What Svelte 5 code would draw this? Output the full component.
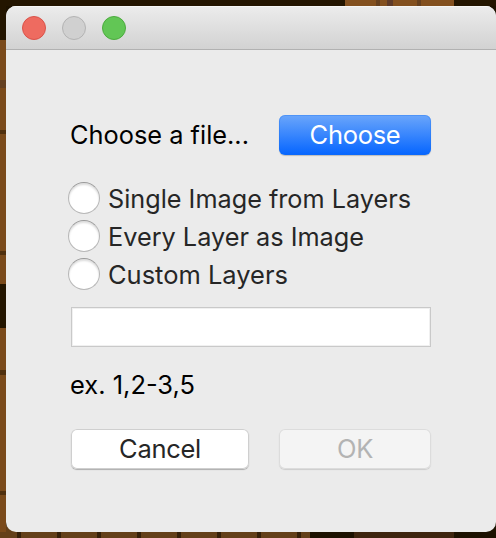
<script>
  const options = [
    { label: 'Single Image from Layers', width: 303 },
    { label: 'Every Layer as Image', width: 256 },
    { label: 'Custom Layers', width: 180 }
  ];
</script>

<main class="desktop">
  <section class="window">
    <header>
      <i class="light red"></i><i class="light gray"></i><i class="light green"></i>
    </header>
    <div class="body">
      <div class="row">
        <svg class="caption" width="200" height="40"><text x="-1" y="29" textLength="179" lengthAdjust="spacingAndGlyphs">Choose a file...</text></svg>
        <button class="primary"><span>Choose</span></button>
      </div>
      <div class="options">
        {#each options as option}
          <label><i class="radio"></i><svg width="320" height="38"><text x="0" y="29" textLength={option.width} lengthAdjust="spacingAndGlyphs">{option.label}</text></svg></label>
        {/each}
      </div>
      <input type="text" aria-label="Layers" />
      <svg class="caption example" width="200" height="40"><text x="-1" y="29" textLength="125" lengthAdjust="spacingAndGlyphs">ex. 1,2-3,5</text></svg>
      <div class="row actions">
        <button class="cancel"><span>Cancel</span></button>
        <button class="ok" disabled><span>OK</span></button>
      </div>
    </div>
  </section>
</main>

<style>
  .desktop {
    box-sizing: border-box;
    width: 496px;
    height: 538px;
    padding: 6px 0 6px 6px;
    overflow: hidden;
    font-family: Inter, "Liberation Sans", sans-serif;
    font-size: 25.5px;
    background:
      linear-gradient(90deg, #231500 345px, #83501f 345px 376px, #66401f 376px 380px, #83501f 380px 387px, #5f3b29 387px 393px, #83501f 393px 417px, #66401f 417px 421px, #83501f 421px 454px, #231500 454px) 0 0 / 496px 6px no-repeat,
      linear-gradient(90deg, #0000 310px, #1c1100 310px 354px, #3e250f 354px 454px, #1c1100 454px) 0 532px / 496px 6px no-repeat,
      repeating-linear-gradient(90deg, #64401a 0 17px, #352009 17px 21px, #64401a 21px 40px) 0 532px / 496px 6px no-repeat,
      linear-gradient(#231500 40px, #7a4a1b 40px 80px, #644022 80px 88px, #7a4a1b 88px 130px, #50300f 130px 134px, #7a4a1b 134px 251px, #50300f 251px 255px, #7a4a1b 255px 284px, #231500 284px 328px, #7a4a1b 328px 370px, #50300f 370px 375px, #7a4a1b 375px 491px, #50300f 491px 495px, #7a4a1b 495px) 0 0 / 6px 538px no-repeat,
      linear-gradient(90deg, #64401a 50%, #1d1200 50%) 0 526px / 496px 12px no-repeat,
      #1d1200;
  }
  .window {
    height: 526px;
    border-radius: 10px;
    overflow: hidden;
    background: #ebebeb;
  }
  header {
    box-sizing: border-box;
    height: 44px;
    padding: 10px 16px;
    display: flex;
    gap: 16px;
    background: linear-gradient(#ececec, #d2d2d2);
    border-bottom: 1px solid #b1b1b1;
    box-shadow: inset 0 1px #f6f6f6;
  }
  .light {
    box-sizing: border-box;
    width: 24px;
    height: 24px;
    border-radius: 50%;
    border: 1px solid;
  }
  .red { background: #ee6b60; border-color: #d9534a; }
  .gray { background: #d0d0d0; border-color: #b3b3b3; }
  .green { background: #62c655; border-color: #4cab3e; }
  .body { padding: 65px 65px 0 65px; }
  .row { display: flex; justify-content: space-between; }
  svg { display: block; overflow: visible; }
  .caption text { fill: #000; }
  button {
    box-sizing: border-box;
    width: 152px;
    height: 40px;
    padding: 0;
    border: 0;
    border-radius: 6px;
    font: inherit;
    line-height: 40px;
  }
  button span { display: block; }
  .primary {
    color: #fff;
    background: linear-gradient(#6ba6fb, #0565ff);
    box-shadow: inset 0 0 0 1px #1770f050, 0 1px 1px #0003;
  }
  .options { margin: 24px 0 0 -3px; }
  label { height: 38px; display: flex; gap: 8px; align-items: flex-start; }
  label text { fill: #262626; }
  .radio {
    box-sizing: border-box;
    flex: none;
    width: 32px;
    height: 32px;
    margin-top: 3px;
    border-radius: 50%;
    background: #fff;
    border: 1px solid #b8b8b8;
    border-top-color: #999;
    box-shadow: inset 0 2px 2px #0002;
  }
  input {
    box-sizing: border-box;
    display: block;
    width: 360px;
    height: 40px;
    margin: 14px 0 0;
    padding: 0 6px;
    border: 1px solid #c9c9c9;
    box-shadow: inset 0 0 0 1px #f0f0f0;
    background: #fff;
    font: inherit;
    outline: none;
  }
  .example { margin-top: 18px; }
  .actions { margin-top: 24px; }
  .primary span, .cancel span, .ok span { letter-spacing: -0.3px; }
  .cancel {
    width: 178px;
    color: #262626;
    background: #fff;
    box-shadow: inset 0 0 0 1px #cfcfcf, 0 1px 1px #0004;
  }
  .ok {
    color: #b3b3b3;
    background: #f4f4f4;
    box-shadow: inset 0 0 0 1px #dcdcdc, 0 1px 1px #0002;
  }
</style>
